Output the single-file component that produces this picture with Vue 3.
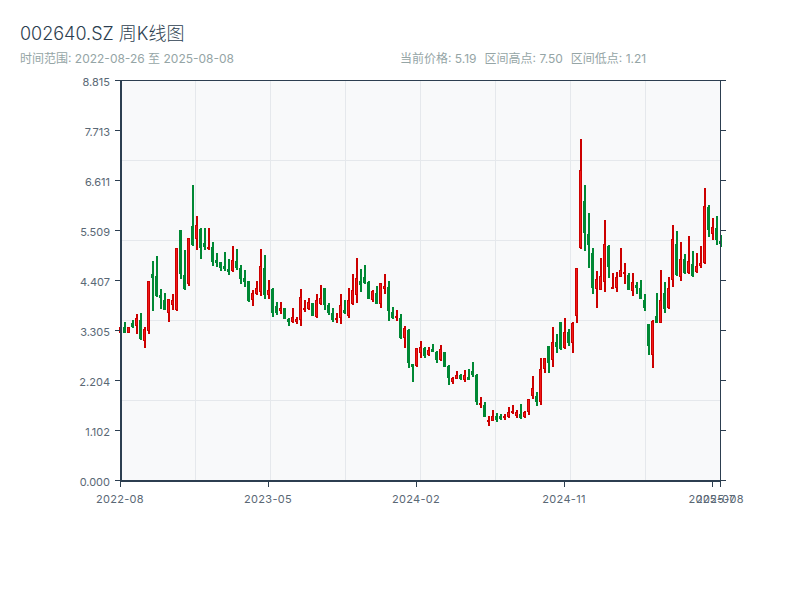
<script setup>
// 周K线数据: [序号由数组位置决定] 高点y, 低点y, 实体上沿y, 实体下沿y, 1=涨(红) 0=跌(绿)
const raw = [
  [325,335,327,333,1],[322,333,327,333,0],[327,333,327,333,1],[320,328,323,327,0],[314,334,318,326,1],
  [313,340,320,339,0],[327,348,329,341,1],[281,334,281,331,1],[261,311,274,278,0],[256,297,276,296,0],
  [289,309,295,298,0],[293,310,300,310,0],[299,322,299,313,1],[294,310,300,305,1],[248,311,248,310,1],
  [230,279,230,274,0],[250,290,275,289,0],[238,286,238,284,1],[185,246,226,245,0],[216,250,225,239,1],
  [228,259,229,248,0],[228,250,243,247,0],[228,250,247,249,1],[242,266,247,262,0],[253,267,260,263,0],
  [262,271,262,268,0],[252,271,266,269,0],[259,275,269,272,0],[246,272,260,271,1],[249,270,261,268,0],
  [265,284,268,279,0],[270,287,278,282,0],[281,302,281,301,0],[290,306,293,300,1],[281,295,288,294,1],
  [249,296,266,292,1],[255,299,268,295,0],[280,299,290,295,1],[288,317,289,313,0],[302,315,306,313,0],
  [302,314,308,311,1],[308,319,308,319,0],[318,326,319,322,0],[308,323,317,322,1],[317,324,319,322,1],
  [289,326,297,320,1],[300,312,308,310,1],[298,310,302,309,1],[303,316,303,316,0],[294,318,300,317,1],
  [285,305,298,304,1],[288,310,288,305,0],[303,315,305,313,0],[308,322,313,320,0],[313,323,318,320,1],
  [294,324,305,318,1],[300,314,310,313,0],[288,318,300,316,1],[274,305,290,304,1],[258,303,278,295,1],
  [269,292,281,285,0],[265,284,277,283,0],[281,299,282,299,0],[290,302,291,300,1],[286,304,293,304,0],
  [283,308,283,304,1],[274,294,286,289,1],[281,321,287,311,0],[307,319,312,318,0],[310,321,316,318,1],
  [314,339,318,338,0],[326,348,328,338,1],[329,368,330,363,0],[364,382,364,367,0],[348,367,348,366,1],
  [341,358,347,353,1],[347,358,348,356,0],[347,356,350,355,1],[344,352,349,352,0],[351,363,352,360,0],
  [345,361,349,360,1],[352,367,352,367,0],[365,385,366,378,0],[377,384,378,382,1],[371,379,375,379,1],
  [374,380,375,379,0],[370,382,375,380,1],[369,380,377,380,0],[362,377,371,375,0],[374,405,375,402,0],
  [397,408,403,405,1],[402,417,405,417,0],[416,426,420,422,1],[410,421,416,421,1],[413,422,416,420,0],
  [414,420,416,419,0],[414,420,416,418,1],[407,418,412,417,1],[405,414,411,413,1],[410,418,412,416,1],
  [404,419,414,418,0],[411,418,412,417,1],[399,415,399,412,1],[376,399,388,396,1],[392,406,396,402,0],
  [358,405,369,402,1],[358,373,358,369,1],[346,373,346,363,0],[327,367,342,360,1],[334,353,342,347,0],
  [322,350,322,349,0],[318,349,332,348,1],[329,346,332,343,0],[322,353,323,343,1],[268,323,268,316,1],
  [139,249,170,248,1],[185,251,201,233,0],[213,268,234,245,0],[248,294,253,288,0],[271,308,279,289,1],
  [258,290,276,290,1],[220,292,244,282,1],[245,278,246,267,0],[273,289,287,289,1],[272,292,277,288,1],
  [248,277,270,277,1],[263,284,272,274,1],[273,290,275,290,0],[273,296,282,291,1],[282,294,285,288,0],
  [280,299,288,299,0],[294,311,300,308,0],[324,355,324,346,0],[320,368,321,355,1],[293,323,316,323,0],
  [270,323,300,323,1],[282,313,293,309,0],[277,309,288,308,1],[225,287,239,280,1],[231,276,244,275,0],
  [242,281,259,277,1],[254,274,259,273,0],[236,274,261,273,1],[251,277,264,276,0],[253,273,266,272,1],
  [246,268,263,266,1],[188,264,206,263,1],[205,237,207,230,0],[218,240,227,234,1],[216,245,228,240,0],
  [235,247,241,244,0]
]

const candles = raw.map((c, i) => ({
  x: 120 + i * 4,
  high: c[0],
  low: c[1],
  top: c[2],
  bottom: c[3],
  up: c[4] === 1
}))

const yTicks = [
  { y: 81, label: '8.815' },
  { y: 131, label: '7.713' },
  { y: 181, label: '6.611' },
  { y: 231, label: '5.509' },
  { y: 281, label: '4.407' },
  { y: 331, label: '3.305' },
  { y: 381, label: '2.204' },
  { y: 431, label: '1.102' },
  { y: 481, label: '0.000' }
]

const xTicks = [
  { x: 120, label: '2022-08' },
  { x: 268, label: '2023-05' },
  { x: 416, label: '2024-02' },
  { x: 564, label: '2024-11' },
  { x: 712, label: '2025-07' },
  { x: 720, label: '2025-08' }
]

const gridX = [195, 270, 345, 420, 495, 570, 645]
const gridY = [160, 240, 320, 400]
</script>

<template>
  <div class="page">
    <div class="head">
      <h1 class="title">002640.SZ 周K线图</h1>
      <div class="meta">
        <span class="range">时间范围: 2022-08-26 至 2025-08-08</span>
        <span class="stats">
          <span>当前价格: 5.19</span>
          <span>区间高点: 7.50</span>
          <span>区间低点: 1.21</span>
        </span>
      </div>
    </div>

    <svg class="chart" width="800" height="600" viewBox="0 0 800 600">
      <rect x="120" y="80" width="601" height="401" fill="#f8f9fa" />

      <line v-for="g in gridX" :key="'gx' + g" :x1="g + 0.5" :x2="g + 0.5" y1="81" y2="480" class="grid" />
      <line v-for="g in gridY" :key="'gy' + g" x1="121" x2="720" :y1="g + 0.5" :y2="g + 0.5" class="grid" />

      <g v-for="c in candles" :key="c.x">
        <rect :x="c.x" :y="c.high" width="2" :height="c.low - c.high" :fill="c.up ? '#cc0000' : '#008834'" />
        <rect
          :x="c.x - 0.5"
          :y="c.top + 0.5"
          width="2"
          :height="Math.max(c.bottom - c.top - 1, 1)"
          :fill="c.up ? '#f01818' : '#008834'"
          :stroke="c.up ? '#cc0000' : '#008834'"
          stroke-width="1"
        />
      </g>

      <rect x="120" y="81" width="2" height="400" class="axis" />
      <rect x="120" y="480" width="601" height="2" class="axis" />
      <rect x="720" y="81" width="1" height="400" class="axis" />
      <rect x="120" y="80" width="606" height="1" class="axis" />

      <g v-for="t in yTicks" :key="t.label">
        <rect x="115" :y="t.y - 1" width="5" height="1" class="axis" />
        <rect x="721" :y="t.y - 1" width="5" height="1" class="axis" />
        <text x="110" :y="t.y + 5" text-anchor="end" class="tick">{{ t.label }}</text>
      </g>

      <g v-for="t in xTicks" :key="t.label">
        <rect :x="t.x" y="482" width="1" height="5" class="axis" />
        <text :x="t.x" y="503" text-anchor="middle" class="tick date">{{ t.label }}</text>
      </g>
    </svg>
  </div>
</template>

<style scoped>
.page { position: relative; width: 800px; height: 600px; background: #fff; overflow: hidden; font-family: Inter, "Noto Sans CJK SC", sans-serif; }
.head { position: absolute; left: 20px; top: 22px; width: 760px; z-index: 1; }
.title { margin: 0; font-size: 18px; line-height: 24px; font-weight: 300; color: #2c3e50; }
.meta { display: flex; margin-top: 5px; font-size: 12px; line-height: 16px; color: #95a5a6; }
.range { width: 380px; }
.stats { display: flex; gap: 8px; }
.chart { display: block; }
.grid { stroke: #e5e8ec; stroke-width: 1; }
.axis { fill: #2c3e50; }
.tick { font-size: 11px; fill: #5a6875; font-family: Inter, sans-serif; }
.date { letter-spacing: 0.3px; }
</style>

<style>
body { background: #fff; }
</style>
